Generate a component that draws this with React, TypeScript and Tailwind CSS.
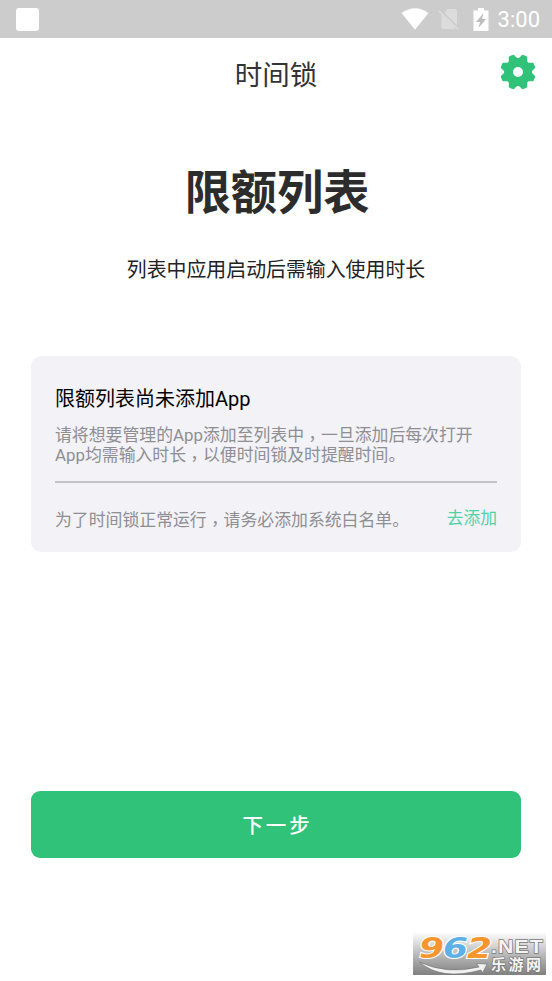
import clsx from "clsx";
import { ReactNode } from "react";

const gearPath = () => {
  // eight flat teeth, the first valley points straight up
  const points: string[] = [];
  for (let i = 0; i <= 192; i++) {
    const angle = (i / 192) * Math.PI * 2;
    const wave = Math.cos(angle * 8);
    const radius = wave > -0.3 ? 17.8 - Math.pow((wave + 0.3) / 1.3, 0.8) * 4 : 17.8;
    const x = 18 + Math.sin(angle) * radius;
    const y = 18 - Math.cos(angle) * radius;
    points.push(`${x.toFixed(2)} ${y.toFixed(2)}`);
  }
  return `M${points.join("L")}ZM18 13a5 5 0 1 0 0 10a5 5 0 1 0 0-10Z`;
};

const Comma = () => (
  <span className="inline-block align-[-4px] font-['Noto_Sans_CJK_TC',sans-serif] leading-[0]">
    ，
  </span>
);

const StatusBar = () => {
  return (
    <div className="flex h-[38px] items-center justify-between bg-[#cccccc] pl-4 pr-3 text-white">
      <div className="h-[23px] w-[23px] rounded-[3px] bg-white" />
      <div className="flex items-center">
        <svg className="h-[22px] w-[28px]" viewBox="0 0 28 22" fill="white">
          <path d="M.5 5Q14-4.600 27.500 5L14 21.800Z" />
        </svg>
        <svg className="ml-[9px] h-[22px] w-[22px]" viewBox="0 0 22 22">
          <path
            d="M9.500 1H17.500Q19 1 19 2.500V17L6.500 5ZM3.500 6.500L17.500 20Q17 21 16 21H5Q3.500 21 3.500 19.500Z"
            fill="#dcdcdc"
          />
          <path d="M1 3l19.500 18.500" stroke="#dcdcdc" strokeWidth="1.600" />
        </svg>
        <svg className="ml-[13px] h-[23px] w-4" viewBox="0 0 16 23">
          <path d="M5 0h6v2.500h4.500V23H.5V2.500H5Z" fill="white" />
          <path d="M10.500 5L3 14H7L5.500 20L13 11H9Z" fill="#bdbdbd" />
        </svg>
        <span className="ml-[9px] pt-[2px] font-[Roboto] text-[22px] leading-none">
          3:00
        </span>
      </div>
    </div>
  );
};

const Header = () => {
  return (
    <header className="grid h-[70px] grid-cols-[1fr_auto_1fr] items-center px-4">
      <h1 className="col-start-2 pt-[5px] text-[27.500px] text-[#333]">时间锁</h1>
      <svg className="mb-[2px] h-9 w-9 justify-self-end" viewBox="0 0 36 36">
        <path d={gearPath()} fill="#30c279" fillRule="evenodd" />
      </svg>
    </header>
  );
};

const Note = ({
  className,
  children,
}: {
  className?: string;
  children: ReactNode;
}) => (
  <p
    className={clsx(
      "whitespace-nowrap text-[16.860px] leading-[19.500px] text-[#8e8e93]",
      className,
    )}
  >
    {children}
  </p>
);

const Watermark = () => {
  return (
    <div className="absolute bottom-[6px] left-[413px] h-[43px] w-[133px] bg-linear-to-b from-white to-[#808080]">
      <svg className="h-full w-full" viewBox="0 0 133 43">
        <g
          fontFamily="DejaVu Sans"
          fontWeight="bold"
          fontStyle="italic"
          fontSize="28"
          stroke="white"
          strokeWidth="2"
          paintOrder="stroke"
        >
          <text x="6" y="26" textLength="25" lengthAdjust="spacingAndGlyphs" fill="#f7962f">9</text>
          <text x="30" y="26" textLength="25" lengthAdjust="spacingAndGlyphs" fill="#5db1e4">6</text>
          <text x="54" y="26" textLength="25" lengthAdjust="spacingAndGlyphs" fill="#f7962f">2</text>
        </g>
        <path
          d="M6.500 30Q34 43 66 35L63.500 31.500L74 32L69.500 41L68 38Q28 49 6.500 30Z"
          fill="#f2f2f2"
          stroke="#777"
          strokeWidth=".7"
        />
        <g fill="#f4f4f4" stroke="#777" strokeWidth="1.300" paintOrder="stroke" fontWeight="bold">
          <text
            x="78"
            y="20.500"
            fontFamily="Liberation Sans"
            fontSize="18.500"
            textLength="53"
            lengthAdjust="spacingAndGlyphs"
            letterSpacing="1"
          >
            .NET
          </text>
          <text x="78" y="38" fontFamily="Noto Sans CJK SC" fontSize="15" textLength="50">乐游网</text>
        </g>
      </svg>
    </div>
  );
};

export default function App() {
  return (
    <div className="relative flex h-[981px] w-[552px] flex-col overflow-hidden bg-white font-['Roboto','Noto_Sans_CJK_SC',sans-serif]">
      <StatusBar />
      <Header />
      <main className="flex flex-col px-[31px]">
        <h2 className="mt-[51px] pl-[2px] text-center text-[46.200px] font-bold leading-[68px] text-[#2c2c2c]">
          限额列表
        </h2>
        <p className="mt-[29px] text-center text-[19.900px] leading-[30px] text-[#222]">
          列表中应用启动后需输入使用时长
        </p>

        <section className="mt-[70px] h-[196px] rounded-[10px] bg-[#f2f2f7] px-6 pt-[28px]">
          <h3 className="text-[20px] leading-[30px] text-black">
            限额列表尚未添加App
          </h3>
          <Note className="mt-[12px]">
            请将想要管理的App添加至列表中
            <Comma />
            一旦添加后每次打开
            <br />
            App均需输入时长
            <Comma />
            以便时间锁及时提醒时间。
          </Note>
          <div className="mt-[16px] h-[2px] bg-[#c2c2c7]" />
          <div className="mt-[24px] flex items-center justify-between">
            <Note className="mt-1">
              为了时间锁正常运行
              <Comma />
              请务必添加系统白名单。
            </Note>
            <a className="text-[16.800px] leading-[19px] text-[#4fd3a5]">去添加</a>
          </div>
        </section>

        <button className="mt-[239px] h-[67px] rounded-[9px] bg-[#30c279] pl-[3px] pt-[3px] text-[20.500px] font-medium tracking-[2.900px] text-white">
          下一步
        </button>
      </main>
      <Watermark />
    </div>
  );
}
